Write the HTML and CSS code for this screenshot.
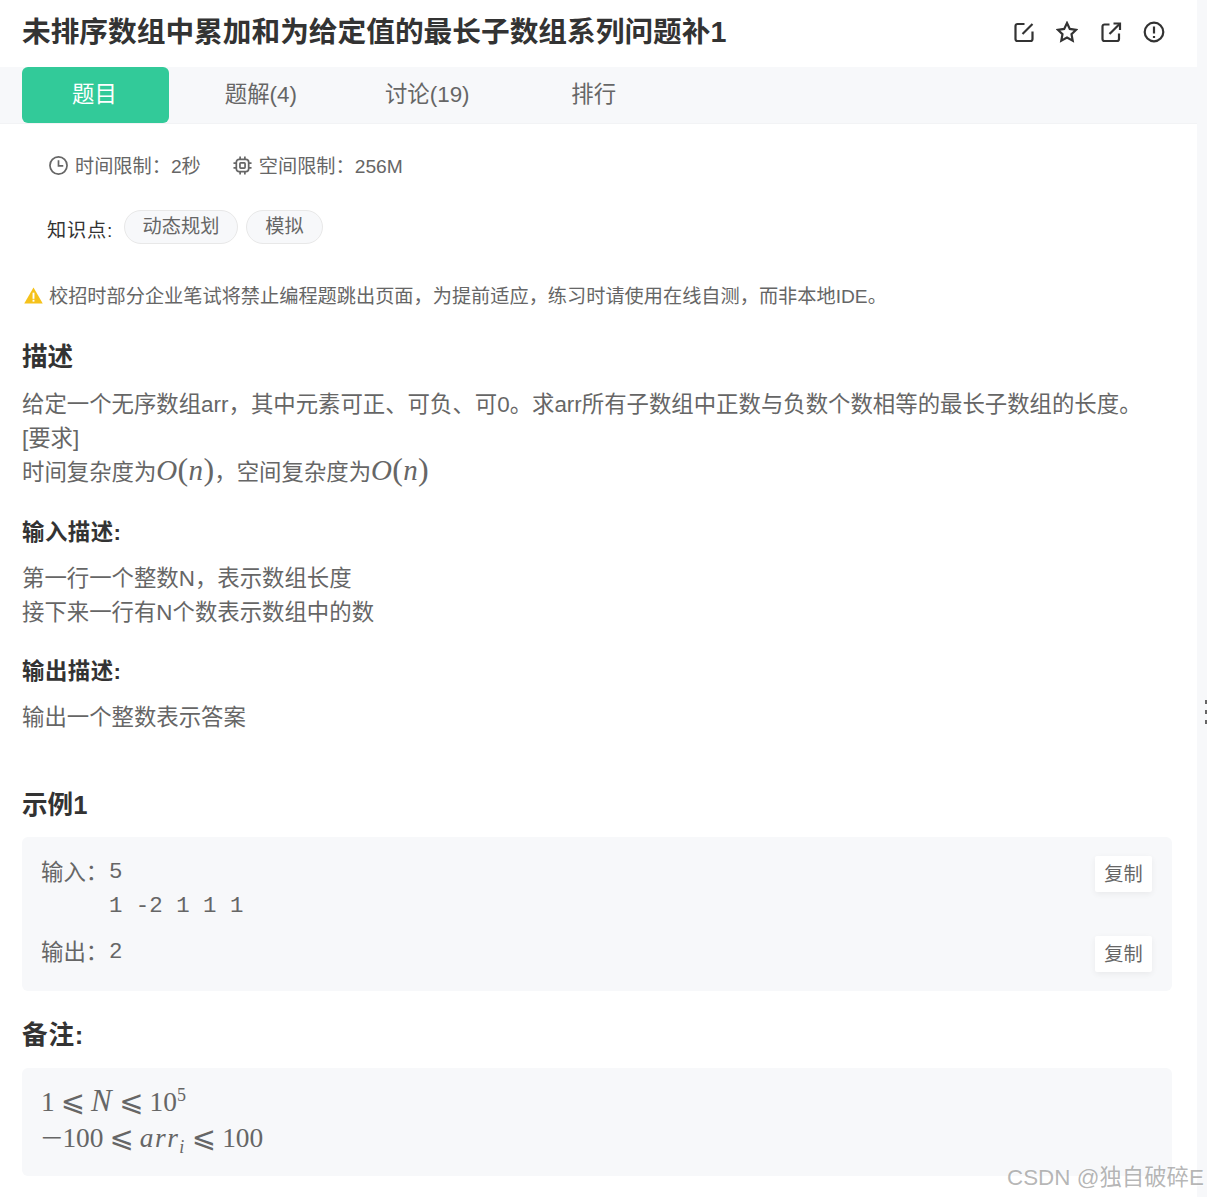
FILE: index.html
```html
<!DOCTYPE html>
<html lang="zh-CN">
<head>
<meta charset="utf-8">
<title>未排序数组中累加和为给定值的最长子数组系列问题补1</title>
<link rel="stylesheet" href="styles.css">
</head>
<body>
<div class="page">
  <main class="main">
    <header class="head">
      <h1 class="title">未排序数组中累加和为给定值的最长子数组系列问题补1</h1>
      <div class="actions">
        <svg class="act" viewBox="0 0 22 22"><path d="M11.500 3H4.500A2 2 0 0 0 2.500 5V18A2 2 0 0 0 4.500 20H17.500A2 2 0 0 0 19.500 18V10.500"/><path d="M19.500 3 9.500 13"/></svg>
        <svg class="act" viewBox="0 0 22 22"><path d="M11 2 13.800 7.900 20.200 8.800 15.500 13.200 16.700 19.600 11 16.500 5.300 19.600 6.500 13.200 1.800 8.800 8.200 7.900Z"/></svg>
        <svg class="act" viewBox="0 0 22 22"><path d="M9.500 3.500H4.500A2 2 0 0 0 2.500 5.500V18A2 2 0 0 0 4.500 20H17A2 2 0 0 0 19 18V12.500"/><path d="M9.500 13 19.800 2.700"/><path d="M13.500 2.500H20V9"/></svg>
        <svg class="act" viewBox="0 0 22 22"><circle cx="11" cy="11" r="9.300"/><path d="M11 5.500V12.500"/><path d="M11 15V17"/></svg>
      </div>
    </header>
    <nav class="tabs">
      <a class="tab tab-on">题目</a>
      <a class="tab">题解(4)</a>
      <a class="tab">讨论(19)</a>
      <a class="tab">排行</a>
    </nav>
    <section class="content">
      <div class="limits">
        <span class="limit">
          <svg class="limit-icon" viewBox="0 0 20 20"><circle cx="10" cy="10" r="9"/><path d="M10 4.500V10.500H15"/></svg>
          时间限制&#xFF1A;2秒
        </span>
        <span class="limit">
          <svg class="limit-icon" viewBox="0 0 20 20"><rect x="3.500" y="3.500" width="13" height="13" rx="3"/><rect x="7.300" y="7.300" width="5.400" height="5.400" rx="0.800"/><path d="M7.500 0.500V3.500M12.500 0.500V3.500M7.500 16.500V19.500M12.500 16.500V19.500M0.500 7.500H3.500M0.500 12.500H3.500M16.500 7.500H19.500M16.500 12.500H19.500"/></svg>
          空间限制&#xFF1A;256M
        </span>
      </div>
      <div class="topics">
        <span class="topics-label">知识点:</span>
        <span class="tag">动态规划</span>
        <span class="tag">模拟</span>
      </div>
      <p class="notice">
        <svg class="notice-icon" viewBox="0 0 20 18"><path d="M10 0.500 19.800 17.500H0.200Z"/><rect class="mark" x="9" y="6" width="2" height="6.500"/><rect class="mark" x="9" y="13.500" width="2" height="2"/></svg>
        校招时部分企业笔试将禁止编程题跳出页面&#xFF0C;为提前适应&#xFF0C;练习时请使用在线自测&#xFF0C;而非本地IDE。
      </p>
    </section>
    <section class="problem">
      <h2 class="h2">描述</h2>
      <p class="txt">给定一个无序数组arr&#xFF0C;其中元素可正、可负、可0。求arr所有子数组中正数与负数个数相等的最长子数组的长度。<br>[要求]<br>时间复杂度为<span class="math big"><i>O</i><span class="paren">(</span><i>n</i><span class="paren">)</span></span>&#xFF0C;空间复杂度为<span class="math big"><i>O</i><span class="paren">(</span><i>n</i><span class="paren">)</span></span></p>
      <h3 class="h3">输入描述:</h3>
      <p class="txt">第一行一个整数N&#xFF0C;表示数组长度<br>接下来一行有N个数表示数组中的数</p>
      <h3 class="h3">输出描述:</h3>
      <p class="txt">输出一个整数表示答案</p>
      <h2 class="h2 h2-sample">示例1</h2>
      <div class="box sample">
        <div class="io io-in">
          <span class="io-label">输入&#xFF1A;</span>
          <pre class="io-val">5
1 -2 1 1 1</pre>
          <button class="copy">复制</button>
        </div>
        <div class="io io-out">
          <span class="io-label">输出&#xFF1A;</span>
          <pre class="io-val">2</pre>
          <button class="copy">复制</button>
        </div>
      </div>
      <h2 class="h2 h2-note">备注:</h2>
      <div class="box note">
        <div class="math formula">1<span class="le">⩽</span><i class="cap">N</i><span class="le">⩽</span>10<sup>5</sup></div>
        <div class="math formula"><span class="minus">−</span>100<span class="le">⩽</span><i class="wide">arr<sub>i</sub></i><span class="le">⩽</span>100</div>
      </div>
    </section>
  </main>
  <aside class="rail"></aside>
  <div class="handle"><b></b><b></b><b></b></div>
  <div class="watermark">CSDN @独自破碎E</div>
</div>
</body>
</html>
```
FILE: styles.css
```css
html, body { margin: 0; padding: 0; background: #fff; }
body { font-family: "Liberation Sans", "Noto Sans CJK SC", sans-serif; color: #666; overflow: hidden; }
.page { position: relative; display: flex; width: 1207px; height: 1197px; overflow: hidden; }
.main { width: 1197px; flex: none; }
.rail { flex: 1; background: #f7f8fa; }

.head { display: flex; align-items: center; justify-content: space-between; height: 67px; padding: 0 32px 3px 22px; box-sizing: border-box; }
.title { margin: 0; font-size: 28.700px; font-weight: 700; color: #333; line-height: 1.2; }
.actions { display: flex; gap: 21.500px; }
.act { width: 22px; height: 22px; fill: none; stroke: #333; stroke-width: 2.200; }

.tabs { display: flex; gap: 19.400px; height: 56px; padding-left: 22px; background: #f7f8fa; border-bottom: 1px solid #f2f3f5; }
.tab { width: 147px; height: 56px; box-sizing: border-box; padding-right: 2px; line-height: 56px; text-align: center; font-size: 22.400px; color: #666; border-radius: 6px; }
.tab-on { background: #32ca99; color: #fff; }

.content { padding: 0 22px; }
.limits { display: flex; gap: 32px; padding: 29px 0 0 27px; font-size: 19.200px; line-height: 28px; }
.limit { display: flex; align-items: center; gap: 7px; }
.limit-icon { width: 19px; height: 19px; margin-bottom: 4px; fill: none; stroke: #666; stroke-width: 1.800; }
.topics { display: flex; align-items: flex-start; gap: 8px; padding: 29px 0 0 25px; font-size: 19.200px; }
.topics-label { color: #333; line-height: 27px; margin: 7px 2.500px 0 0; letter-spacing: 0.800px; }
.tag { height: 32px; line-height: 31px; padding: 0 18px; border: 1px solid #e8e8e8; border-radius: 17px; background: #f7f8fa; }
.tag:first-of-type { padding: 0 17.500px; }
.notice { display: flex; align-items: center; gap: 6px; margin: 39px 0 0; font-size: 19.200px; line-height: 28px; }
.notice-icon { width: 19px; height: 17px; margin: 0 0 3px 2px; fill: #f5c21b; }
.notice-icon .mark { fill: #fff; }

.problem { padding: 0 25px 0 22px; }
.h2 { margin: 28px 0 0; font-size: 25.600px; line-height: 36px; color: #333; font-weight: 700; }
.h3 { margin: 25px 0 0; font-size: 22.400px; line-height: 34px; color: #333; font-weight: 700; letter-spacing: 0.500px; }
.txt { margin: 12px 0 0; font-size: 22.400px; line-height: 34px; }
.h2 + .txt { margin-top: 13px; }
.h2 + .txt + .h3 { margin-top: 26px; }
.h2-sample { margin-top: 52px; }
.h2-note { margin-top: 26px; letter-spacing: 0.800px; }
.math { font-family: "Liberation Serif", "DejaVu Serif", serif; }
.big { font-size: 29px; line-height: 0; letter-spacing: 0.300px; }
.paren { font-size: 32px; font-weight: 400; line-height: 0; }

.box { background: #f7f8fa; border-radius: 6px; }
.sample { margin-top: 14px; padding: 18px 20px 19px 19px; }
.io { display: flex; align-items: flex-start; font-size: 22.400px; line-height: 34px; }
.io-out { margin-top: 12px; }
.io-label { width: 68px; flex: none; padding-top: 1px; }
.io-val { margin: 0; flex: 1; font-family: "Liberation Mono", "DejaVu Sans Mono", monospace; font-size: 22.400px; line-height: 34px; }
.copy { width: 57px; height: 36px; margin-top: 1px; padding: 0 0 3px; border: 0; border-radius: 2px; background: #fff; color: #666; font: 19.200px "Liberation Sans", "Noto Sans CJK SC", sans-serif; box-shadow: 0 2px 6px rgba(0,0,0,.06); }

.note { margin-top: 15px; height: 108px; padding: 16px 19px 0; box-sizing: border-box; }
.formula { font-size: 27.400px; line-height: 36px; white-space: nowrap; }
.le { font-family: "DejaVu Sans", serif; font-size: 29px; line-height: 0; margin: 0 6px; }
.wide { letter-spacing: 1.500px; }
.cap { font-size: 31px; line-height: 0; letter-spacing: 1.500px; }
.minus { display: inline-block; width: 21.400px; transform: scaleX(1.400); transform-origin: left center; }
sup { font-size: 18px; line-height: 0; }
sub { font-size: 18px; line-height: 0; }

.handle { position: absolute; left: 1205px; top: 700px; display: flex; flex-direction: column; gap: 6.500px; }
.handle b { display: block; width: 2px; height: 3.500px; background: #666; }
.watermark { position: absolute; left: 1007px; top: 1163px; white-space: nowrap; font-size: 22.400px; line-height: 30px; color: rgba(120,120,120,.55); text-shadow: 1px 1px 1px rgba(255,255,255,.6); }
```
